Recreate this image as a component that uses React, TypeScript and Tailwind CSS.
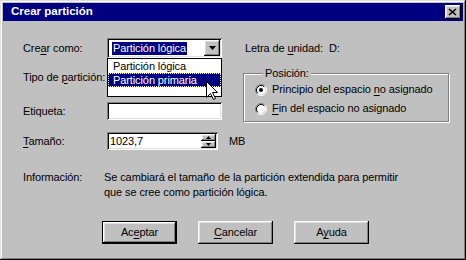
import React from 'react';

const raised =
  'shadow-[inset_-1px_-1px_#000,inset_1px_1px_#fff,inset_-2px_-2px_#808080,inset_2px_2px_#dfdfdf]';
const sunken =
  'shadow-[inset_1px_1px_#808080,inset_-1px_-1px_#fff,inset_2px_2px_#000,inset_-2px_-2px_#dfdfdf]';

function U({ children }: { children: React.ReactNode }) {
  return <span className="underline underline-offset-[2px]">{children}</span>;
}

function Radio({ checked }: { checked?: boolean }) {
  return (
    <svg width="12" height="12" viewBox="0 0 12 12" className="shrink-0">
      <circle cx="6" cy="6" r="4.5" fill="#fff" />
      <path d="M2.11 9.89 A5.5 5.5 0 0 1 9.89 2.11" stroke="#808080" fill="none" />
      <path d="M9.89 2.11 A5.5 5.5 0 0 1 2.11 9.89" stroke="#fff" fill="none" />
      <path d="M2.82 9.18 A4.5 4.5 0 0 1 9.18 2.82" stroke="#000" fill="none" />
      <path d="M9.18 2.82 A4.5 4.5 0 0 1 2.82 9.18" stroke="#dfdfdf" fill="none" />
      {checked && <circle cx="6" cy="6" r="2" fill="#000" />}
    </svg>
  );
}

function Btn({ children, isDefault }: { children: React.ReactNode; isDefault?: boolean }) {
  if (isDefault) {
    return (
      <div className="w-[75px] h-[23px] border border-black">
        <div className={`w-full h-full bg-[#c0c0c0] flex items-center justify-center ${raised}`}>
          {children}
        </div>
      </div>
    );
  }
  return (
    <div className={`w-[75px] h-[23px] bg-[#c0c0c0] flex items-center justify-center ${raised}`}>
      {children}
    </div>
  );
}

export default function App() {
  return (
    <div
      className={`w-[466px] h-[260px] bg-[#c0c0c0] p-[3px] flex flex-col text-[11px] tracking-[-0.1px] text-black font-['Liberation_Sans',Arial,sans-serif] shadow-[inset_-1px_-1px_#000,inset_1px_1px_#dfdfdf,inset_-2px_-2px_#808080,inset_2px_2px_#fff]`}
    >
      {/* Title bar */}
      <div className="h-[18px] bg-[#000080] flex items-center justify-between pl-[8px] pr-[2px]">
        <span className="text-white font-bold text-[11.5px] tracking-normal">Crear partición</span>
        <div className={`w-[16px] h-[14px] bg-[#c0c0c0] ${raised}`}>
          <svg width="16" height="14" viewBox="0 0 16 14">
            <path d="M4 4 L11 10 M11 4 L4 10" stroke="#000" strokeWidth="1.6" />
          </svg>
        </div>
      </div>

      {/* Body */}
      <div className="pl-[20px] pt-[17px] flex flex-col">
        <div className="flex items-start">
          {/* Left column */}
          <div className="w-[199px] flex flex-col">
            <div className="h-[20px] flex items-center">
              <span className="w-[84px]">
                Cre<U>a</U>r como:
              </span>
              <div className={`relative w-[115px] h-[20px] bg-white p-[2px] flex items-center ${sunken}`}>
                <div className="flex-1 pl-[3px]">
                  <span className="bg-[#000080] text-white px-[1px] leading-[13px] inline-block">
                    Partición lógica
                  </span>
                </div>
                <div className={`w-[16px] h-[16px] bg-[#c0c0c0] flex items-center justify-center ${raised}`}>
                  <svg width="7" height="4" viewBox="0 0 7 4">
                    <path d="M0 0 H7 L3.5 4 Z" fill="#000" />
                  </svg>
                </div>

                {/* Open dropdown list */}
                <div className="absolute left-0 top-full w-full h-[39px] bg-white border border-black z-10">
                  <div className="h-[14px] pl-[5px] flex items-center">Partición lógica</div>
                  <div className="h-[14px] pl-[5px] flex items-center bg-[#000080] text-white outline-dotted outline-1 outline-[#ffff80] -outline-offset-1">
                    Partición primaria
                  </div>
                </div>
                <svg
                  width="12"
                  height="20"
                  viewBox="0 0 12 20"
                  className="absolute left-[99px] top-[43px] z-20"
                >
                  <path
                    d="M0.5 0.5 L0.5 16.5 L4.5 12.5 L7.5 18.5 L9.5 17.5 L6.5 11.5 L11.5 11.5 Z"
                    fill="#fff"
                    stroke="#000"
                  />
                </svg>
              </div>
            </div>

            <div className="mt-[9px] h-[20px] flex items-center">
              <span>
                Tipo de <U>p</U>artición:
              </span>
            </div>

            <div className="mt-[15px] h-[18px] flex items-center">
              <span className="w-[84px]">Etiqueta:</span>
              <div className={`w-[115px] h-[18px] bg-white ${sunken}`} />
            </div>
          </div>

          {/* Right column */}
          <div className="ml-[21px] flex flex-col">
            <div className="h-[20px] flex items-center pl-[2px] gap-[6px]">
              <span>
                Letra de <U>u</U>nidad:
              </span>
              <span>D:</span>
            </div>

            <div className="relative mt-[15px] w-[206px] h-[49px] border border-[#808080] shadow-[1px_1px_0_#fff,inset_1px_1px_0_#fff] pt-[6px] pl-[11px]">
              <span className="absolute -top-[8px] left-[19px] px-[2px] bg-[#c0c0c0] leading-[15px]">
                Posición:
              </span>
              <div className="h-[19px] flex items-center gap-[5px]">
                <Radio checked />
                <span>
                  Principio del espacio <U>n</U>o asignado
                </span>
              </div>
              <div className="h-[19px] flex items-center gap-[5px]">
                <Radio />
                <span>
                  <U>F</U>in del espacio no asignado
                </span>
              </div>
            </div>
          </div>
        </div>

        {/* Size */}
        <div className="mt-[10px] h-[18px] flex items-center">
          <span className="w-[84px]">
            <U>T</U>amaño:
          </span>
          <div className={`w-[111px] h-[18px] bg-white p-[2px] flex items-center ${sunken}`}>
            <span className="flex-1 pl-[1px]">1023,7</span>
            <div className="w-[15px] h-[14px] flex flex-col">
              <div className={`h-[7px] bg-[#c0c0c0] flex items-center justify-center ${raised}`}>
                <svg width="5" height="3" viewBox="0 0 5 3">
                  <path d="M2.5 0 L5 3 H0 Z" fill="#000" />
                </svg>
              </div>
              <div className={`h-[7px] bg-[#c0c0c0] flex items-center justify-center ${raised}`}>
                <svg width="5" height="3" viewBox="0 0 5 3">
                  <path d="M0 0 H5 L2.5 3 Z" fill="#000" />
                </svg>
              </div>
            </div>
          </div>
          <span className="ml-[11px]">MB</span>
        </div>

        {/* Info */}
        <div className="mt-[20px] flex leading-[15px]">
          <span className="w-[81px]">Información:</span>
          <p>
            Se cambiará el tamaño de la partición extendida para permitir
            <br />
            que se cree como partición lógica.
          </p>
        </div>

        {/* Buttons */}
        <div className="mt-[21px] ml-[79px] flex gap-[21px]">
          <Btn isDefault>
            <span>
              Ac<U>e</U>ptar
            </span>
          </Btn>
          <Btn>
            <span>
              <U>C</U>ancelar
            </span>
          </Btn>
          <Btn>
            <span>
              A<U>y</U>uda
            </span>
          </Btn>
        </div>
      </div>
    </div>
  );
}
